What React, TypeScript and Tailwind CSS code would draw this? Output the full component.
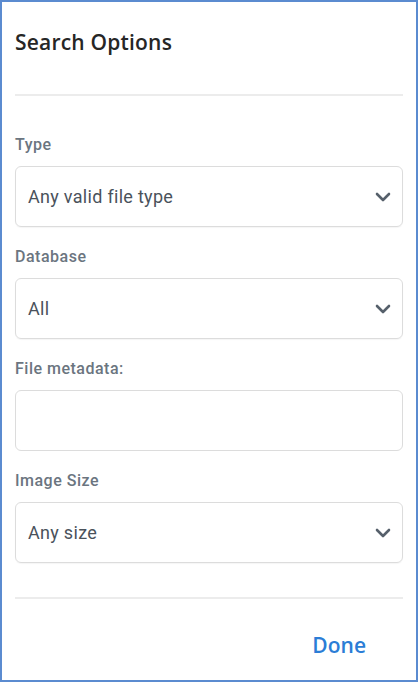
import { ReactNode } from "react";

function Chevron() {
  return (
    <svg width="16" height="10" viewBox="0 0 16 10" fill="none" className="shrink-0">
      <path d="M2 2l6 6 6-6" stroke="#56606b" strokeWidth="2.6" strokeLinecap="round" strokeLinejoin="round" />
    </svg>
  );
}

function Field({ label, children }: { label: string; children: ReactNode }) {
  return (
    <div className="flex flex-col">
      <div className="h-5 leading-5 text-[16px] tracking-[0.5px] font-medium text-[#6b7580]">{label}</div>
      <div className="mt-[11px]">{children}</div>
    </div>
  );
}

function SelectBox({ value }: { value: string }) {
  return (
    <div className="h-[61px] rounded-md border border-[#dcdcdc] flex items-center justify-between pl-3 pr-[11px] shadow-[0_1px_1px_rgba(0,0,0,0.04)]">
      <span className="text-[18px] tracking-[0.3px] text-[#4a525b]">{value}</span>
      <Chevron />
    </div>
  );
}

export default function App() {
  return (
    <div
      className="w-[418px] h-[682px] bg-white border-2 border-[#5b8bd0] px-[13px] flex flex-col"
      style={{ fontFamily: "Roboto, 'Liberation Sans', sans-serif" }}
    >
      <h1 className="pt-[26px] h-[54px] leading-7 text-[21px] font-semibold text-[#262626] font-['Open_Sans',sans-serif] tracking-[0.2px]">
        Search Options
      </h1>
      <div className="mt-[38px] h-[2px] bg-[#ececec]" />

      <div className="mt-[39px] flex flex-col gap-[20px]">
        <Field label="Type">
          <SelectBox value="Any valid file type" />
        </Field>
        <Field label="Database">
          <SelectBox value="All" />
        </Field>
        <Field label="File metadata:">
          <div className="h-[61px] rounded-md border border-[#dcdcdc]" />
        </Field>
        <Field label="Image Size">
          <SelectBox value="Any size" />
        </Field>
      </div>

      <div className="mt-[34px] h-[2px] bg-[#ececec]" />

      <div className="flex justify-end pr-[37px] mt-[32px]">
        <button className="text-[21px] leading-7 font-semibold text-[#2b7dd6] font-['Open_Sans',sans-serif]">
          Done
        </button>
      </div>
    </div>
  );
}
